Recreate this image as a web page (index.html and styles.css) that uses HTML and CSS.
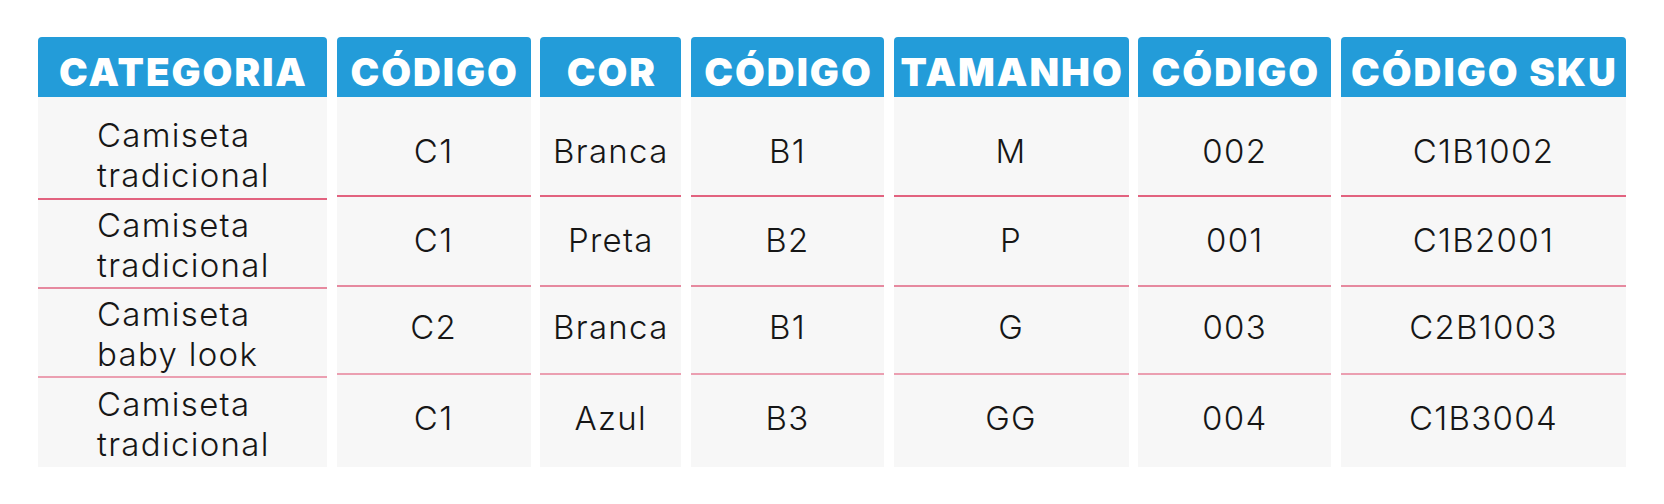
FILE: index.html
```html
<!DOCTYPE html>
<html lang="pt-BR">
<head>
<meta charset="utf-8">
<title>Tabela SKU</title>
<link rel="stylesheet" href="styles.css">
</head>
<body>
<div class="board">
  <div class="col col--cat">
    <div class="head">CATEGORIA</div>
    <div class="cell r1"><div class="stack">Camiseta<br>tradicional</div></div>
    <div class="cell r2"><div class="stack">Camiseta<br>tradicional</div></div>
    <div class="cell r3"><div class="stack">Camiseta<br>baby look</div></div>
    <div class="cell r4"><div class="stack">Camiseta<br>tradicional</div></div>
  </div>
  <div class="col col--c1">
    <div class="head">CÓDIGO</div>
    <div class="cell r1">C1</div>
    <div class="cell r2">C1</div>
    <div class="cell r3">C2</div>
    <div class="cell r4">C1</div>
  </div>
  <div class="col col--cor">
    <div class="head">COR</div>
    <div class="cell r1">Branca</div>
    <div class="cell r2">Preta</div>
    <div class="cell r3">Branca</div>
    <div class="cell r4">Azul</div>
  </div>
  <div class="col col--c2">
    <div class="head">CÓDIGO</div>
    <div class="cell r1">B1</div>
    <div class="cell r2">B2</div>
    <div class="cell r3">B1</div>
    <div class="cell r4">B3</div>
  </div>
  <div class="col col--tam">
    <div class="head">TAMANHO</div>
    <div class="cell r1">M</div>
    <div class="cell r2">P</div>
    <div class="cell r3">G</div>
    <div class="cell r4">GG</div>
  </div>
  <div class="col col--c3">
    <div class="head">CÓDIGO</div>
    <div class="cell r1">002</div>
    <div class="cell r2">001</div>
    <div class="cell r3">003</div>
    <div class="cell r4">004</div>
  </div>
  <div class="col col--sku">
    <div class="head">CÓDIGO SKU</div>
    <div class="cell r1">C1B1002</div>
    <div class="cell r2">C1B2001</div>
    <div class="cell r3">C2B1003</div>
    <div class="cell r4">C1B3004</div>
  </div>
</div>
</body>
</html>
```
FILE: styles.css
```css
html, body {
  margin: 0;
  padding: 0;
  background: #ffffff;
}

.board {
  display: flex;
  gap: 9.67px;
  padding: 37px 0 0 38px;
}

.col {
  display: flex;
  flex-direction: column;
  flex: none;
}

.col--cat { width: 289px; }
.col--c1  { width: 194px; }
.col--cor { width: 141px; }
.col--c2  { width: 193px; }
.col--tam { width: 235px; }
.col--c3  { width: 193px; }
.col--sku { width: 285px; }

.head {
  height: 60px;
  box-sizing: border-box;
  background: #239cd9;
  border-radius: 4px 4px 0 0;
  color: #ffffff;
  font-family: Inter, Lato, "Liberation Sans", sans-serif;
  font-weight: 900;
  font-size: 38.5px;
  letter-spacing: 2px;
  text-indent: 2px;
  line-height: 1;
  display: flex;
  align-items: center;
  justify-content: center;
  padding-top: 11px;
  white-space: nowrap;
}

.cell {
  box-sizing: border-box;
  background: #f7f7f7;
  display: flex;
  align-items: center;
  justify-content: center;
  font-family: Inter, "Open Sans", sans-serif;
  font-weight: 300;
  font-size: 33px;
  line-height: 40px;
  letter-spacing: 1.3px;
  color: #161616;
}

/* row heights and separators (value columns) */
.r1 { height: 100px; border-bottom: 2px solid #e2627f; padding-top: 9px; }
.r2 { height: 90px;  border-bottom: 2px solid #e6899f; padding-bottom: 2px; }
.r3 { height: 88px;  border-bottom: 2px solid #eb9fb1; padding-bottom: 6px; }
.r4 { height: 92px;  padding-bottom: 7px; }

/* category column has its own row rhythm and a fixed left inset */
.col--cat .cell {
  justify-content: flex-start;
  padding-left: 59px;
  padding-bottom: 0;
  padding-top: 2px;
}
.col--cat .r1 { height: 103px; padding-top: 15px; }
.col--cat .r2 { height: 89px; }
.col--cat .r3 { height: 89px; }
.col--cat .r4 { height: 89px; }

.stack {
  text-align: left;
}
```
